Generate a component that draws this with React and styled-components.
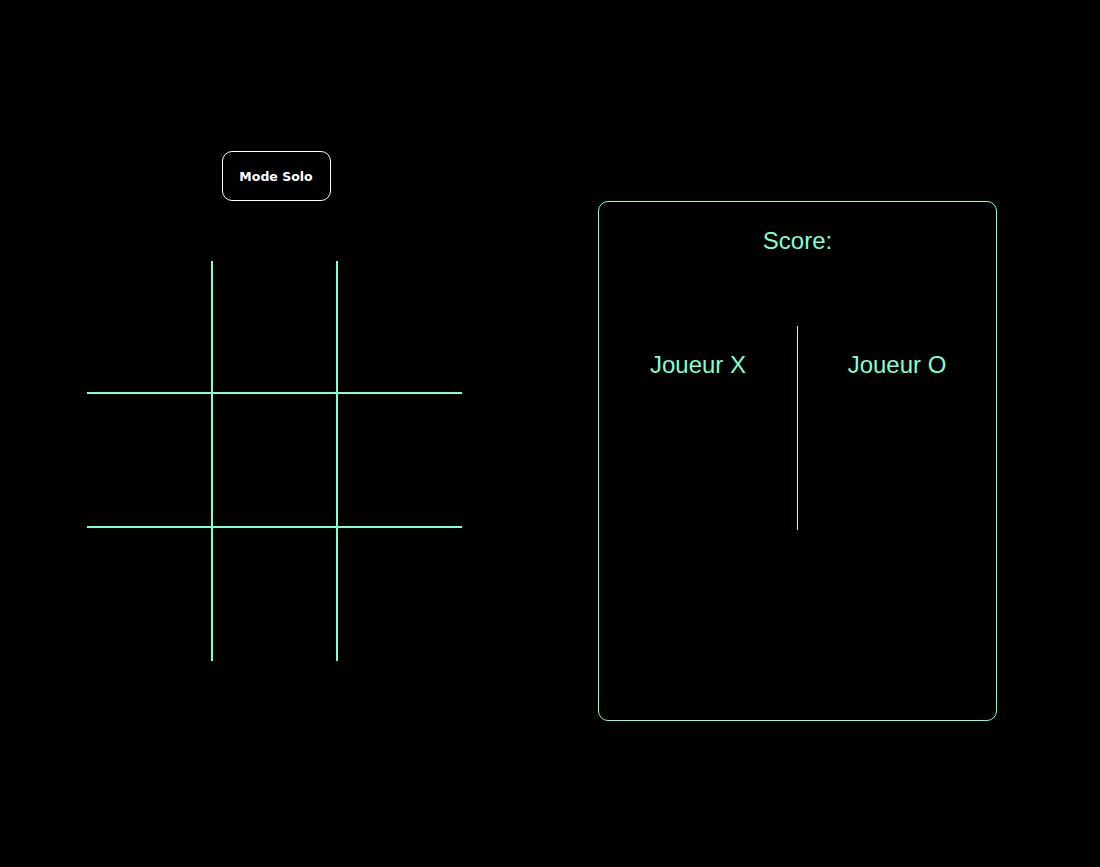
import React from "react";
import styled, { createGlobalStyle } from "styled-components";

const GlobalStyle = createGlobalStyle`
  html, body {
    margin: 0;
    padding: 0;
    background: #000;
  }
  body {
    font-family: "Liberation Sans", Arial, sans-serif;
  }
`;

const cells = Array.from({ length: 9 }, (_, i) => i);

export default function App() {
  return (
    <>
      <GlobalStyle />
      <Page>
        <GameColumn>
          <ModeButton>Mode Solo</ModeButton>
          <Board>
            {cells.map((i) => (
              <Cell key={i} $col={i % 3} $row={Math.floor(i / 3)} />
            ))}
          </Board>
        </GameColumn>

        <ScorePanel>
          <ScoreTitle>Score:</ScoreTitle>
          <Players>
            <Player>Joueur X</Player>
            <Divider />
            <Player>Joueur O</Player>
          </Players>
        </ScorePanel>
      </Page>
    </>
  );
}

/* ================== Styled Components ================== */

const Page = styled.div`
  display: flex;
  align-items: flex-start;
  min-height: 867px;
  padding-left: 87px;
  gap: 136px;
  box-sizing: border-box;
`;

const GameColumn = styled.div`
  display: flex;
  flex-direction: column;
  align-items: center;
  width: 375px;
  padding-top: 151px;
  gap: 60px;
`;

const ModeButton = styled.button`
  width: 109px;
  height: 50px;
  margin-left: 3px;
  background: #000;
  color: #fff;
  border: 1px solid #fff;
  border-radius: 10px;
  font-family: "DejaVu Sans", Verdana, sans-serif;
  font-weight: bold;
  font-size: 12.5px;
  cursor: pointer;
`;

const Board = styled.div`
  display: grid;
  grid-template-columns: 126px 125px 124px;
  grid-template-rows: repeat(3, 1fr);
  width: 375px;
  height: 400px;
`;

const Cell = styled.div`
  box-sizing: border-box;
  border-right: ${(p) => (p.$col < 2 ? "2px solid #7fffd4" : "none")};
  border-bottom: ${(p) => (p.$row < 2 ? "2px solid #7fffd4" : "none")};
`;

const ScorePanel = styled.div`
  margin-top: 201px;
  width: 399px;
  height: 520px;
  box-sizing: border-box;
  border: 1px solid #7fffd4;
  border-radius: 10px;
  padding-top: 25px;
  color: #7fffd4;
`;

const ScoreTitle = styled.div`
  text-align: center;
  font-size: 24px;
`;

const Players = styled.div`
  display: flex;
  margin-top: 71px;
`;

const Player = styled.div`
  flex: 1;
  text-align: center;
  font-size: 24px;
  padding-top: 25px;
`;

const Divider = styled.div`
  width: 1px;
  height: 204px;
  background: #b4ffe6;
`;
